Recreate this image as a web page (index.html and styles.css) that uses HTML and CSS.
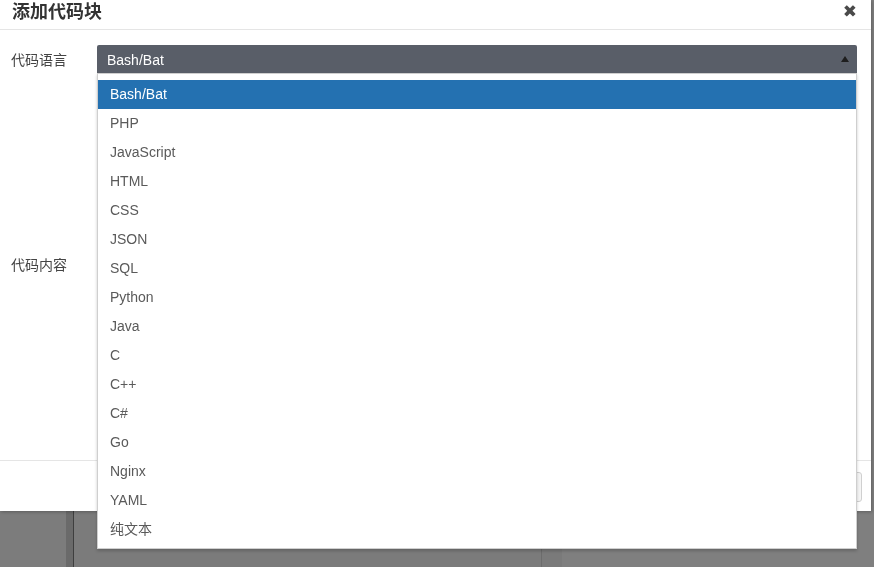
FILE: index.html
```html
<!DOCTYPE html>
<html lang="zh-CN">
<head>
  <meta charset="UTF-8" />
  <title>添加代码块</title>
  <link rel="stylesheet" href="styles.css">
</head>
<body>
  <!-- page behind the dialog, dimmed -->
  <div class="backdrop">
    <div class="col col-side"></div>
    <div class="col col-rail"></div>
    <div class="col col-main"></div>
    <div class="col col-gutter"></div>
    <div class="col col-rest"></div>
  </div>

  <div class="modal">
    <div class="modal-header">
      <h4 class="modal-title">添加代码块</h4>
      <span class="modal-close">&#10006;</span>
    </div>
    <div class="modal-body">
      <div class="form-row">
        <label class="form-label">代码语言</label>
        <div class="select">
          <span class="select-value">Bash/Bat</span>
          <span class="select-arrow"></span>
        </div>
      </div>
      <div class="form-row form-row-tall">
        <label class="form-label">代码内容</label>
        <div class="code-area"></div>
      </div>
    </div>
    <div class="modal-footer">
      <button class="btn">确定</button>
    </div>
  </div>

  <!-- open language list -->
  <ul class="dropdown">
    <li class="dropdown-item active">Bash/Bat</li>
    <li class="dropdown-item">PHP</li>
    <li class="dropdown-item">JavaScript</li>
    <li class="dropdown-item">HTML</li>
    <li class="dropdown-item">CSS</li>
    <li class="dropdown-item">JSON</li>
    <li class="dropdown-item">SQL</li>
    <li class="dropdown-item">Python</li>
    <li class="dropdown-item">Java</li>
    <li class="dropdown-item">C</li>
    <li class="dropdown-item">C++</li>
    <li class="dropdown-item">C#</li>
    <li class="dropdown-item">Go</li>
    <li class="dropdown-item">Nginx</li>
    <li class="dropdown-item">YAML</li>
    <li class="dropdown-item">纯文本</li>
  </ul>
</body>
</html>
```

FILE: styles.css
```css
body {
  margin: 0;
  background: #7f7f7f;
  font-family: 'Liberation Sans', Arial, 'Noto Sans CJK SC', sans-serif;
  font-size: 14px;
  color: #555;
  overflow: hidden;
}
.backdrop {
  position: fixed;
  top: 0;
  left: 0;
  width: 100%;
  height: 100%;
  display: flex;
}
.col {
  height: 100%;
}
.col-side {
  width: 66px;
  background: #7c7c7c;
}
.col-rail {
  width: 7px;
  background: #6a6a6a;
  border-right: 1px solid #3e3e3e;
}
.col-main {
  width: 467px;
  background: #7b7b7b;
  border-right: 1px solid #6c6c6c;
}
.col-gutter {
  width: 20px;
  background: #7a7a7a;
}
.col-rest {
  flex: 1;
  background: #7f7f7f;
}

/* Dialog */
.modal {
  position: absolute;
  top: 0;
  left: 0;
  width: 871px;
  height: 511px;
  background: #fff;
  box-shadow: 1px 1px 3px rgba(0, 0, 0, 0.25);
  display: flex;
  flex-direction: column;
}
.modal-header {
  height: 30px;
  border-bottom: 1px solid #e5e5e5;
  display: flex;
  align-items: flex-start;
  justify-content: space-between;
  padding: 0 14px 0 12px;
  box-sizing: border-box;
}
.modal-title {
  margin: 0;
  font-size: 18px;
  line-height: 24px;
  font-weight: bold;
  color: #333;
}
.modal-close {
  font-size: 17px;
  line-height: 22px;
  color: #4a4a4a;
  font-family: 'DejaVu Sans', sans-serif;
}
.modal-body {
  flex: 1;
  padding: 15px 14px 0 11px;
}
.form-row {
  display: flex;
  align-items: center;
}
.form-row-tall {
  align-items: flex-start;
  margin-top: 14px;
}
.form-row-tall .form-label {
  padding-top: 167px;
}
.form-label {
  width: 86px;
  color: #444;
  font-size: 14px;
}
.select {
  flex: 1;
  height: 28px;
  background: #595e68;
  border-radius: 2px 2px 0 0;
  color: #fff;
  display: flex;
  align-items: center;
  justify-content: space-between;
  padding: 1px 8px 0 10px;
  box-sizing: border-box;
}
.select-arrow {
  width: 0;
  height: 0;
  border-left: 4px solid transparent;
  border-right: 4px solid transparent;
  border-bottom: 6px solid #1e1e1e;
  margin-bottom: 1px;
}
.code-area {
  flex: 1;
  height: 340px;
}
.modal-footer {
  height: 51px;
  box-sizing: border-box;
  border-top: 1px solid #e5e5e5;
  display: flex;
  justify-content: flex-end;
  align-items: flex-start;
  padding: 11px 9px 0 0;
}
.btn {
  height: 30px;
  width: 64px;
  border: 1px solid #d0d0d0;
  border-radius: 3px;
  background: #f5f5f5;
  font-family: inherit;
  font-size: 14px;
  color: #333;
}

/* Language list */
.dropdown {
  position: absolute;
  top: 73px;
  left: 97px;
  width: 760px;
  margin: 0;
  padding: 6px 0 4px;
  list-style: none;
  background: #fff;
  border: 1px solid #cfcfcf;
  box-sizing: border-box;
  box-shadow: 0 2px 3px rgba(0, 0, 0, 0.2);
}
.dropdown-item {
  height: 29px;
  line-height: 28px;
  padding-left: 12px;
  color: #5a5a5a;
}
.dropdown-item.active {
  background: #2471b1;
  color: #fff;
}
```
